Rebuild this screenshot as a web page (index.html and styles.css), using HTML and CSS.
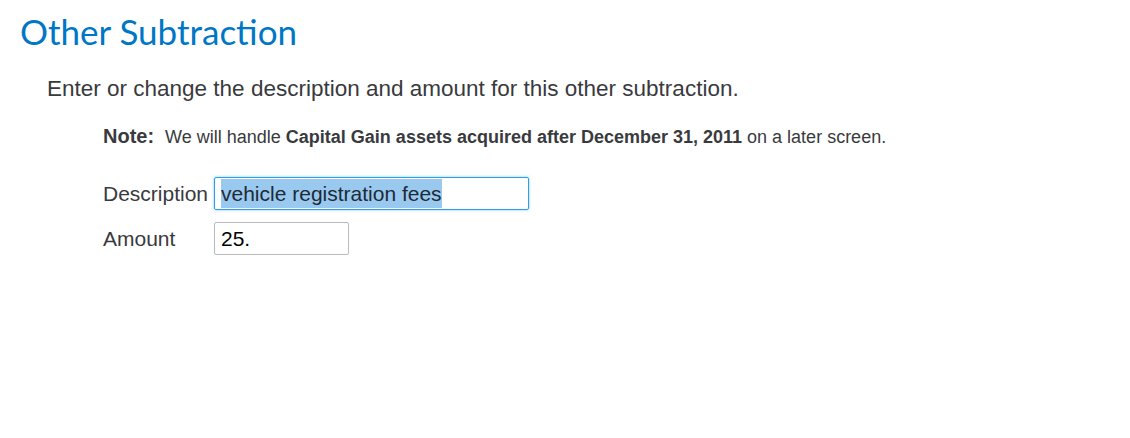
FILE: index.html
```html
<!DOCTYPE html>
<html lang="en">
<head>
    <meta charset="UTF-8">
    <title>Other Subtraction</title>
    <link rel="stylesheet" href="styles.css">
</head>
<body>
    <div class="page">
        <h1 class="title">Other Subtraction</h1>
        <p class="intro">Enter or change the description and amount for this other subtraction.</p>

        <div class="details">
            <p class="note"><span class="note-label">Note:</span> We will handle <b>Capital Gain assets acquired after December 31, 2011</b> on a later screen.</p>

            <div class="field">
                <label for="description">Description</label>
                <div class="input focused"><span class="selected">vehicle registration fees</span></div>
            </div>
            <div class="field">
                <label for="amount">Amount</label>
                <div class="input short">25.</div>
            </div>
        </div>
    </div>
</body>
</html>
```

FILE: styles.css
```css
body {
    margin: 0;
    background: #fff;
    font-family: "Liberation Sans", Arial, sans-serif;
    color: #393a3d;
}
.page {
    padding: 10px 20px;
}
.title {
    margin: 0;
    font-family: Lato, "Open Sans", sans-serif;
    font-weight: 400;
    font-size: 35px;
    line-height: 42px;
    color: #0077c5;
}
.intro {
    margin: 24px 0 0 27px;
    font-size: 22.5px;
    line-height: 26px;
}
.details {
    margin-left: 83px;
}
.note {
    margin: 23px 0 0;
    font-size: 18px;
    line-height: 22px;
}
.note-label {
    font-weight: bold;
    font-size: 20px;
    margin-right: 6px;
}
.field {
    display: flex;
    align-items: center;
    margin-top: 29px;
}
.field + .field {
    margin-top: 12px;
}
.field label {
    width: 111px;
    font-size: 21px;
}
.input {
    box-sizing: border-box;
    width: 315px;
    height: 33px;
    padding: 0 6px;
    border: 1px solid #bbb;
    border-radius: 2px;
    font-size: 21px;
    line-height: 31px;
    color: #000;
}
.input.short {
    width: 135px;
}
.input.focused {
    border-color: #2ca0e3;
    box-shadow: 0 0 3px rgba(44, 160, 227, 0.6);
}
.selected {
    background: #99c9ef;
    color: #1e2a36;
    padding: 3px 0;
}
```
